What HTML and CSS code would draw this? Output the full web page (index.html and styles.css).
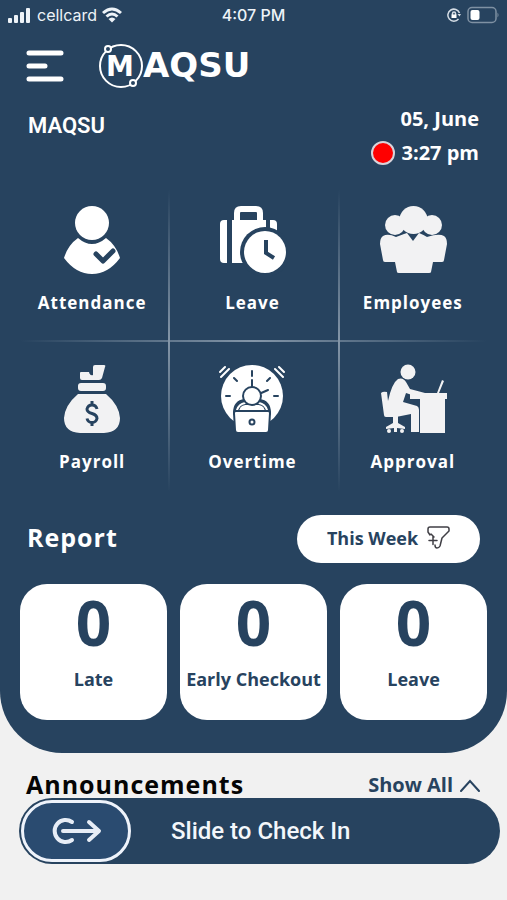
FILE: index.html
```html
<!DOCTYPE html>
<html lang="en">
<head>
<meta charset="utf-8">
<meta name="viewport" content="width=device-width, initial-scale=1">
<title>MAQSU</title>
<link rel="stylesheet" href="styles.css">
</head>
<body>
<main class="hero">
  <div class="status">
    <div class="carrier">
      <svg width="24" height="16" viewBox="0 0 24 16" fill="currentColor" aria-hidden="true"><rect x="0" y="11" width="4" height="5" rx="1"/><rect x="6" y="8" width="4" height="8" rx="1"/><rect x="12" y="5" width="4" height="11" rx="1"/><rect x="18" y="1" width="4" height="15" rx="1"/></svg>
      <span>cellcard</span>
      <svg class="wifi" width="20" height="16" viewBox="0 0 20 16" fill="none" stroke="currentColor" stroke-width="3" aria-hidden="true"><path d="M1 6Q10-2 19 6M4.500 9.500Q10 4.500 15.500 9.500"/><path d="M6.500 12Q10 9 13.500 12L10 15.500z" fill="currentColor" stroke="none"/></svg>
    </div>
    <span class="clock">4:07 PM</span>
    <div class="power">
      <svg width="14" height="14" viewBox="0 0 14 14" fill="none" stroke="#d5dde5" stroke-width="1.500" aria-hidden="true"><path d="M12.500 5A6 6 0 1 0 11.500 11"/><path d="M10.500 6h3.500l-1.500 2.500z" fill="#d5dde5" stroke="none"/><path d="M5.500 7V5.500a1.500 1.500 0 0 1 3 0V7"/><rect x="4.500" y="6.500" width="5" height="3.500" fill="#fff" stroke="none"/></svg>
      <svg width="32" height="18" viewBox="0 0 32 18" aria-hidden="true"><rect x="1" y="1.500" width="28" height="15" rx="4" fill="none" stroke="#7f91a3" stroke-width="1.500"/><rect x="3.500" y="4" width="9" height="10" rx="2" fill="#fff"/><path d="M30.500 6.500q2 2.500 0 5z" fill="#7f91a3"/></svg>
    </div>
  </div>

  <header class="topbar">
    <button class="menu" aria-label="Menu">
      <svg width="38" height="32" viewBox="0 0 38 32" stroke="#fff" stroke-width="5" stroke-linecap="round" aria-hidden="true"><path d="M3 3h32M3 16h16M3 29h32"/></svg>
    </button>
    <svg class="logo" width="170" height="48" viewBox="0 0 170 48" role="img" aria-label="MAQSU">
      <circle cx="23" cy="24" r="21" fill="none" stroke="#fff" stroke-width="2"/>
      <circle cx="10" cy="7" r="3" fill="#27435f" stroke="#fff" stroke-width="2"/>
      <circle cx="35" cy="41" r="3" fill="#27435f" stroke="#fff" stroke-width="2"/>
      <text class="logo-m" x="8" y="34">M</text>
      <text class="logo-rest" x="45" y="35">AQSU</text>
    </svg>
  </header>

  <section class="info">
    <h1 class="company">MAQSU</h1>
    <div class="when">
      <span>05, June</span>
      <span class="time"><i class="dot"></i>3:27 pm</span>
    </div>
  </section>

  <nav class="tiles">
    <a class="tile" href="#attendance">
      <svg width="72" height="72" viewBox="0 0 72 72" fill="#fff" aria-hidden="true"><circle cx="36" cy="19" r="17"/><path d="M22 34q14 12 28 0q10 7 14 20q-12 16-28 16T8 54q4-13 14-20z"/><path d="M40 50l7 7 10-10" fill="none" stroke="#27435f" stroke-width="5" stroke-linecap="round" stroke-linejoin="round"/></svg>
      <span>Attendance</span>
    </a>
    <a class="tile" href="#leave">
      <svg width="72" height="72" viewBox="0 0 72 72" aria-hidden="true"><g fill="#fff"><path d="M11 16v43H8q-4 0-4-4V20q0-4 4-4zM16 16h34v43H16zM54 16h3q4 0 4 4v8h-7z"/><path d="M21 18V9q0-4 4-4h15q4 0 4 4v9" fill="none" stroke="#fff" stroke-width="6"/></g><circle cx="49" cy="48" r="25" fill="#27435f"/><circle cx="49" cy="48" r="21" fill="#fff"/><path d="M50 36v13l8 5" fill="none" stroke="#27435f" stroke-width="4"/></svg>
      <span>Leave</span>
    </a>
    <a class="tile" href="#employees">
      <svg width="72" height="72" viewBox="0 0 72 72" fill="#f2f2f3" aria-hidden="true"><circle cx="18" cy="21" r="10"/><circle cx="55" cy="21" r="10"/><ellipse cx="36.500" cy="16" rx="14" ry="14"/><path d="M27 30l3-1L36 37l6-8q5 2 8 4 12-4 17-1 3 2 3 8l-3 16q0 2-2 2H56l-2 10q0 1-2 1H22q-2 0-2-1l-2-10H8q-2 0-2-2L3 40q0-6 3-8 5-3 13 1z"/></svg>
      <span>Employees</span>
    </a>
    <a class="tile" href="#payroll">
      <svg width="72" height="72" viewBox="0 0 72 72" fill="#f2f2f3" aria-hidden="true"><path d="M25 9h8q1 4 4 3V4q0-2 2-2h9q2 0 1 2l-3 11q-1 2-3 2H26q-2 0-2-2V10q0-1 1-1zM25 20h22q3 0 3 3v2q0 3-3 3H25q-3 0-3-3v-2q0-3 3-3zM22 31h28q13 11 14 24 0 14-16 15H24Q8 69 8 55 9 42 22 31z"/><path d="M41 46q-1-4-5-4t-5 4q0 3 5 4.500t5 5q-1 4-5 4t-5-4M36 38v4M36 59v4" fill="none" stroke="#27435f" stroke-width="3"/></svg>
      <span>Payroll</span>
    </a>
    <a class="tile" href="#overtime">
      <svg width="72" height="72" viewBox="0 0 72 72" fill="none" stroke="#27435f" stroke-width="2" stroke-linejoin="round" stroke-linecap="round" aria-hidden="true"><circle cx="36" cy="33" r="31" fill="#fff" stroke="none"/><path d="M36 8v5M36 17v8M10 33h4M58 33h4M18 15l3 3M54 15l-3 3M43 31l9-4"/><path d="M4 9l5-5M5 14l8-8M68 9l-5-5M67 14l-8-8" stroke="#fff"/><path d="M20 50q0-10 9-11h14q9 1 9 11" stroke-width="6"/><path d="M21 47q2-6 8-7M51 47q-2-6-8-7" stroke="#fff"/><circle cx="36" cy="33" r="9" fill="#fff"/><path d="M20 48h32q2 0 2 2l-1 17q0 3-3 3H22q-3 0-3-3l-1-17q0-2 2-2z" fill="#fff"/><circle cx="36" cy="59" r="2.500"/></svg>
      <span>Overtime</span>
    </a>
    <a class="tile" href="#approval">
      <svg width="72" height="72" viewBox="0 0 72 72" fill="#f2f2f3" aria-hidden="true"><circle cx="31" cy="9" r="7.500"/><path d="M21 16q5-2 8 3l4 7 15 4v2H35l-6-2-3 9 14 4q2 1 2 4v22h-8V51L19 54H9q-2 0-2-2L4 30q2-2 6-1l1 9q4-18 10-22z"/><path d="M33 30h37v6h-2v34H43V36H33zM60 30l5-13 2 1-5 12zM16 53h5v7l7 4v2l-8-1v4h-3v-4l-8 1v-2l7-4z"/><circle cx="12" cy="68" r="2"/><circle cx="25" cy="68" r="2"/></svg>
      <span>Approval</span>
    </a>
  </nav>

  <section class="report">
    <div class="report-head">
      <h2>Report</h2>
      <button class="filter">This Week
        <svg width="24" height="24" viewBox="0 0 24 24" fill="none" stroke="#403f45" stroke-width="1.500" stroke-linejoin="round" stroke-linecap="round" aria-hidden="true"><path d="M4 9L2 6V3q0-2 2-2h17q2 0 2 2v2l-7 7-2 8q-1 2-3 2-2 0-2-3M5 8l3 3M3 14.500h8M7 10.500v8"/></svg>
      </button>
    </div>
    <div class="cards">
      <article class="card"><strong>0</strong><span>Late</span></article>
      <article class="card"><strong>0</strong><span>Early Checkout</span></article>
      <article class="card"><strong>0</strong><span>Leave</span></article>
    </div>
  </section>
</main>

<section class="announce">
  <h2>Announcements</h2>
  <a class="show" href="#all">Show All
    <svg width="20" height="14" viewBox="0 0 20 14" fill="none" stroke="currentColor" stroke-width="2" stroke-linecap="round" aria-hidden="true"><path d="M1 13l9-10 9 10"/></svg>
  </a>
</section>
<div class="slider">
  <button class="thumb" aria-label="Check in">
    <svg width="52" height="30" viewBox="0 0 52 30" fill="none" stroke="#e7edf6" stroke-width="4" stroke-linecap="round" stroke-linejoin="round" aria-hidden="true"><path d="M22 6A11 11 0 1 0 22 24M13 15h35M39 6l10 9-10 9"/></svg>
  </button>
  <span>Slide to Check In</span>
</div>
</body>
</html>
```
FILE: styles.css
```css
* { box-sizing: border-box; }
body {
  margin: 0;
  background: #f1f1f1;
  color: #27435f;
  font-family: "Open Sans", "Noto Sans", sans-serif;
  font-weight: 700;
}
h1, h2, strong { margin: 0; font-weight: 700; }
a { color: inherit; text-decoration: none; }
button { border: 0; padding: 0; background: none; font: inherit; color: inherit; cursor: pointer; }
svg { display: block; flex: none; }

.hero {
  background: #27435f;
  color: #fff;
  border-radius: 0 0 62px 62px;
  padding-bottom: 33px;
}
.status {
  display: grid;
  grid-template-columns: 1fr auto 1fr;
  align-items: center;
  height: 30px;
  padding: 0 8px;
  font: 500 16px "Inter", sans-serif;
  color: #eef3f8;
}
.carrier, .power { display: flex; align-items: center; gap: 5px; }
.carrier span { font-weight: 400; }
.power { justify-content: flex-end; gap: 6px; }

.topbar {
  display: flex;
  align-items: center;
  gap: 34px;
  padding: 12px 26px 0;
}
.logo-m, .logo-rest { fill: #fff; font-family: "DejaVu Sans", sans-serif; font-weight: 700; }
.logo-m { font-size: 28px; }
.logo-rest { font-size: 34px; }

.info {
  display: flex;
  justify-content: space-between;
  padding: 12px 28px 0;
}
.company { font: 600 22px/48px "Roboto", sans-serif; }
.when {
  display: flex;
  flex-direction: column;
  align-items: flex-end;
  font-size: 20px;
  line-height: 34px;
}
.time { display: flex; align-items: center; gap: 7px; }
.dot { width: 24px; height: 24px; border: 2px solid #d9d3da; border-radius: 50%; background: #f00; }

.tiles {
  display: grid;
  grid-template-columns: repeat(3, 1fr);
  margin-top: 20px;
  padding: 0 14px 0 12px;
  background:
    linear-gradient(transparent, #8496a8 50%, transparent) 33.2% 0 / 2px 302px no-repeat,
    linear-gradient(transparent, #8496a8 50%, transparent) 67% 0 / 2px 302px no-repeat,
    linear-gradient(90deg, transparent, #8496a8 50%, transparent) 50% 150px / 92% 2px no-repeat;
}
.tile {
  display: flex;
  flex-direction: column;
  align-items: center;
  gap: 15px;
  height: 159px;
  padding-top: 14px;
  font-size: 17px;
  line-height: 24px;
  letter-spacing: 1px;
}

.report { padding: 7px 20px 0; }
.report-head {
  display: flex;
  justify-content: space-between;
  align-items: flex-start;
  padding: 0 7px;
}
.report-head h2 { font-size: 25px; line-height: 44px; letter-spacing: 1px; }
.filter {
  display: flex;
  align-items: center;
  justify-content: center;
  gap: 8px;
  width: 183px;
  height: 48px;
  padding-bottom: 2px;
  border-radius: 24px;
  background: #fff;
  color: #27435f;
  font-size: 18px;
}
.cards {
  display: grid;
  grid-template-columns: repeat(3, 1fr);
  gap: 13px;
  margin-top: 21px;
}
.card {
  display: flex;
  flex-direction: column;
  align-items: center;
  height: 136px;
  border-radius: 27px;
  background: #fff;
  color: #27435f;
  font-size: 18px;
  white-space: nowrap;
}
.card strong { font-size: 62px; line-height: 76px; }
.card span { line-height: 38px; }

.announce {
  display: flex;
  justify-content: space-between;
  align-items: center;
  height: 45px;
  padding: 18px 27px 0 26px;
}
.announce h2 { color: #050505; font-size: 25px; line-height: 27px; letter-spacing: 1px; }
.show { display: flex; align-items: center; gap: 7px; font-size: 20px; line-height: 27px; }

.slider {
  display: flex;
  align-items: center;
  gap: 40px;
  height: 66px;
  margin: 0 7px 0 19px;
  padding: 2px;
  border-radius: 33px;
  background: #27435f;
  color: #f3f7fb;
  font: 500 24px "Roboto", sans-serif;
}
.thumb {
  display: flex;
  align-items: center;
  justify-content: center;
  width: 110px;
  height: 62px;
  border: 3px solid #eef3fb;
  border-radius: 31px;
  background: #2a4b70;
}
```
